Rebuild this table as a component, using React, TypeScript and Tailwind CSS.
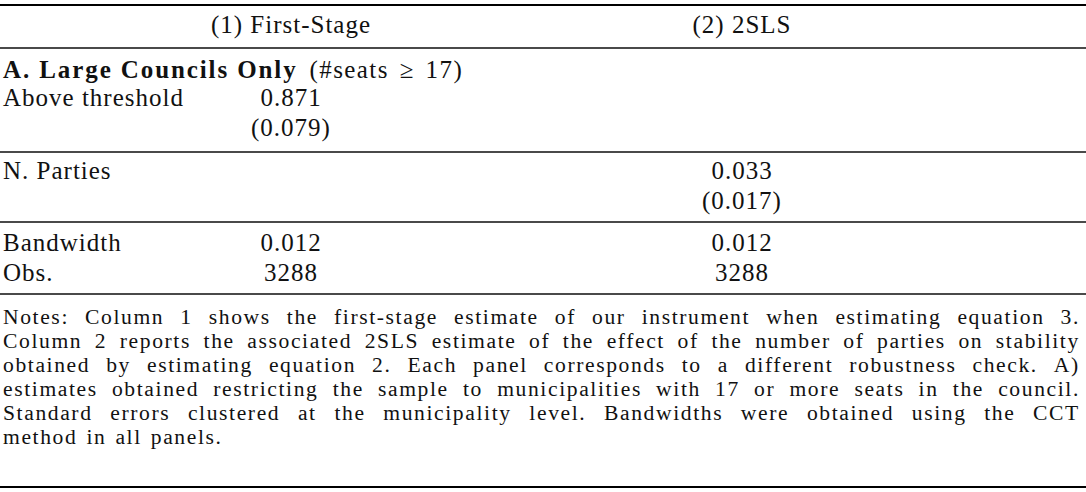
import React from "react";

const notesLines = [
  "Notes: Column 1 shows the first-stage estimate of our instrument when estimating equation 3.",
  "Column 2 reports the associated 2SLS estimate of the effect of the number of parties on stability",
  "obtained by estimating equation 2. Each panel corresponds to a different robustness check. A)",
  "estimates obtained restricting the sample to municipalities with 17 or more seats in the council.",
  "Standard errors clustered at the municipality level. Bandwidths were obtained using the CCT",
];

function Row({ label, c1, c2 }: { label?: React.ReactNode; c1?: string; c2?: string }) {
  return (
    <div className="grid grid-cols-[200px_182px_1fr] h-[30px] leading-[30px]">
      <div className="pl-[3px] whitespace-nowrap">{label}</div>
      <div className="text-center whitespace-nowrap">{c1}</div>
      <div className="text-center pl-[16px] whitespace-nowrap">{c2}</div>
    </div>
  );
}

export default function App() {
  return (
    <div className="w-[1086px] h-[492px] bg-white text-[#111] font-['Liberation_Serif','Times_New_Roman',serif] text-[25px] tracking-[1px] pt-[4px] flex flex-col overflow-hidden">
      <div className="h-[2px] bg-black" />
      <div className="mt-[4px]">
        <Row c1="(1) First-Stage" c2="(2) 2SLS" />
      </div>
      <div className="h-[2px] bg-[#4a4a4a] mt-[7px]" />
      <div className="mt-[6px]">
        <div className="h-[28px] leading-[30px] pl-[3px] whitespace-nowrap">
          <span className="font-bold tracking-[1.9px]">A. Large Councils Only</span>
          <span className="ml-[12px] tracking-[1.4px]">(#seats</span>
          <span className="mx-[11px]">≥</span>
          <span className="tracking-[1.4px]">17)</span>
        </div>
        <Row label="Above threshold" c1="0.871" />
        <Row c1="(0.079)" />
      </div>
      <div className="h-[2px] bg-[#4a4a4a] mt-[8px]" />
      <div className="mt-[3px]">
        <Row label="N. Parties" c2="0.033" />
        <Row c2="(0.017)" />
      </div>
      <div className="h-[2px] bg-[#4a4a4a] mt-[5px]" />
      <div className="mt-[5px]">
        <Row label="Bandwidth" c1="0.012" c2="0.012" />
        <Row label="Obs." c1="3288" c2="3288" />
      </div>
      <div className="h-[2px] bg-[#4a4a4a] mt-[5px]" />
      <div className="mt-[10px] pl-[3px] pr-[6px] text-[21.6px] tracking-[1.6px]">
        {notesLines.map((line, i) => (
          <div key={i} className="h-[24px] leading-[24px] flex justify-between whitespace-nowrap">
            {line.split(" ").map((w, j) => (
              <span key={j}>{w}</span>
            ))}
          </div>
        ))}
        <div className="h-[24px] leading-[24px] flex gap-[9px] whitespace-nowrap">
          <span>method</span>
          <span>in</span>
          <span>all</span>
          <span>panels.</span>
        </div>
      </div>
      <div className="h-[2px] bg-black mt-[37px]" />
    </div>
  );
}
